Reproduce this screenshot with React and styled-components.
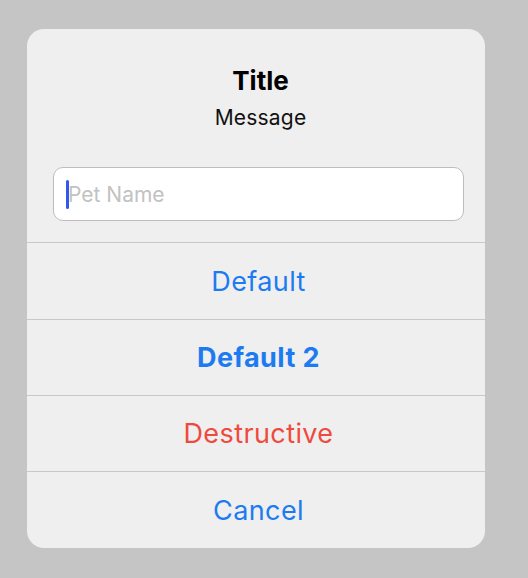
import React from "react";
import styled, { createGlobalStyle } from "styled-components";

const Global = createGlobalStyle`
  html, body { margin: 0; padding: 0; background: #c5c5c5; }
  body { font-family: Inter, "Liberation Sans", Arial, sans-serif; }
`;

const Page = styled.div`
  width: 528px;
  height: 578px;
  padding: 29px 0 0 27px;
  box-sizing: border-box;
`;

const Card = styled.div`
  width: 458px;
  height: 519px;
  background: #efefef;
  border-radius: 17px;
  display: flex;
  flex-direction: column;
  overflow: hidden;
`;

const Header = styled.div`
  display: flex;
  flex-direction: column;
  align-items: center;
  padding: 37px 21px 21px 26px;
`;

const Title = styled.div`
  font-size: 26px;
  font-weight: 700;
  line-height: 30px;
  color: #000;
  padding-left: 4px;
`;

const Message = styled.div`
  font-size: 21px;
  line-height: 24px;
  margin-top: 10px;
  color: #111;
  letter-spacing: 0.2px;
  padding-left: 4px;
`;

const Field = styled.div`
  margin-top: 37px;
  align-self: stretch;
  height: 52px;
  background: #fff;
  border: 1px solid #bdbdbd;
  border-radius: 10px;
  display: flex;
  align-items: center;
  padding-left: 12px;
`;

const Caret = styled.span`
  width: 3px;
  height: 29px;
  border-radius: 1.5px;
  background: #3158ee;
`;

const Placeholder = styled.span`
  font-size: 21px;
  color: #c2c2c2;
  margin-left: -1px;
`;

const Action = styled.div`
  height: ${(p) => (p.$first ? 77 : 76)}px;
  border-top: 1px solid #c8c8c8;
  display: flex;
  align-items: center;
  justify-content: center;
  padding-left: 5px;
  font-size: 27px;
  letter-spacing: 0.4px;
  font-weight: ${(p) => (p.$bold ? 700 : 400)};
  color: ${(p) => (p.$destructive ? "#ef4a3e" : "#1d7bf2")};
  box-sizing: border-box;
  flex: ${(p) => (p.$last ? 1 : "none")};
`;

export default function App() {
  return (
    <>
      <Global />
      <Page>
        <Card>
          <Header>
            <Title>Title</Title>
            <Message>Message</Message>
            <Field>
              <Caret />
              <Placeholder>Pet Name</Placeholder>
            </Field>
          </Header>
          <Action $first>Default</Action>
          <Action $bold>Default 2</Action>
          <Action $destructive>Destructive</Action>
          <Action $last>Cancel</Action>
        </Card>
      </Page>
    </>
  );
}
